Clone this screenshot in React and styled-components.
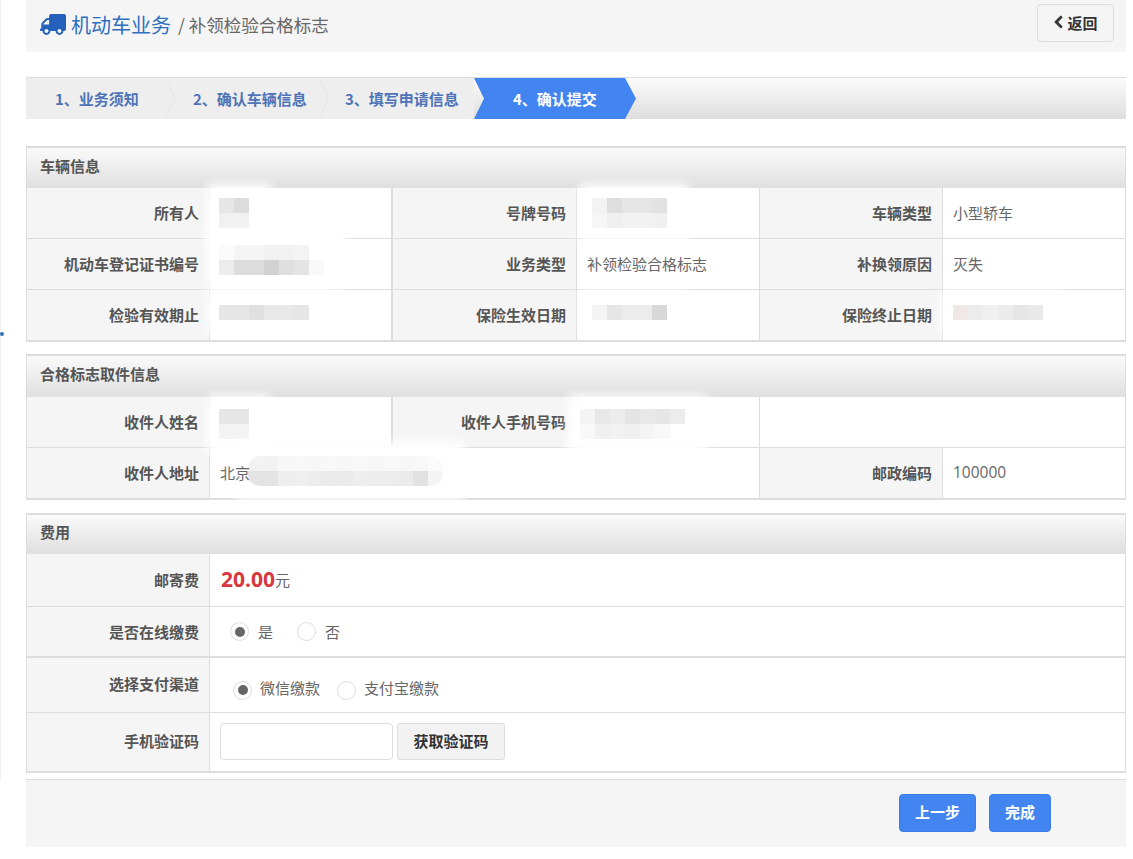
import React from 'react'
import styled, { createGlobalStyle } from 'styled-components'
import { FaTruck, FaChevronLeft } from 'react-icons/fa'

const GlobalStyle = createGlobalStyle`
  html, body {
    margin: 0;
    padding: 0;
    background: #fff;
  }
  body {
    font-family: "Noto Sans CJK SC", "Liberation Sans", sans-serif;
    font-size: 15px;
    color: #666;
  }
  * {
    box-sizing: border-box;
  }
`;
const Page = styled.div`
  position: relative;
  width: 1133px;
  height: 859px;
  padding-left: 26px;
  overflow: hidden;
`;
const Rail = styled.div`
  position: absolute;
  left: 0;
  top: 0;
  width: 2px;
  height: 780px;
  border-left: 1px solid #f0f0f0;
  &::after {
    content: '';
    position: absolute;
    left: -1px;
    top: 332px;
    width: 4px;
    height: 4px;
    border-radius: 50%;
    background: #2f6fb5;
  }
`;
const Content = styled.div`
  width: 1100px;
`;
const TitleBar = styled.div`
  height: 52px;
  background: #f5f5f5;
  display: flex;
  align-items: center;
  justify-content: space-between;
  padding: 0 12px 6px 14px;
`;
const Title = styled.div`
  display: flex;
  align-items: center;
  margin-top: 2px;
`;
const TruckIcon = styled(FaTruck)`
  width: 26px;
  height: 23px;
  color: #2461bd;
  transform: scaleX(-1);
  margin-right: 5px;
`;
const TitleMain = styled.span`
  font-size: 20px;
  color: #2f6fc0;
`;
const TitleSub = styled.span`
  font-size: 17.5px;
  color: #666;
  margin-left: 7px;
`;
const BackButton = styled.button`
  width: 77px;
  height: 38px;
  border: 1px solid #ddd;
  border-radius: 4px;
  background: #f5f5f5;
  color: #333;
  font: bold 15px "Noto Sans CJK SC", sans-serif;
  display: flex;
  align-items: center;
  justify-content: center;
  gap: 3px;
  padding: 0 0 2px;
  svg {
    width: 11px;
    height: 14px;
    stroke: currentColor;
    stroke-width: 30;
  }
`;
const Steps = styled.div`
  display: flex;
  height: 42px;
  margin-top: 25px;
  border-top: 1px solid #ddd;
  background: linear-gradient(#fbfbfb, #dedede);
`;
const Step = styled.div`
  position: relative;
  width: ${(props) => props.$width}px;
  background: ${(props) => props.$active ? '#4285f0' : props.$plain ? '#eee' : 'transparent'};
  clip-path: ${(props) => props.$active ? 'polygon(0 0, 151px 0, 162px 50%, 151px 100%, 0 100%, 10px 50%)' : 'none'};
  color: ${(props) => props.$active ? '#fff' : '#4e74b8'};
  font-weight: bold;
  font-size: 15px;
  line-height: 41px;
  padding-left: ${(props) => props.$indent}px;
`;
const StepChevron = styled.svg`
  position: absolute;
  z-index: 1;
  right: -9px;
  top: 0;
  width: 10px;
  height: 41px;
`;
const Section = styled.div`
  border: 1px solid #ddd;
  border-top-width: 2px;
  border-bottom-width: 2px;
  margin-top: ${(props) => props.$gap}px;
`;
const SectionHead = styled.div`
  height: ${(props) => props.$height}px;
  background: linear-gradient(#fafafa, #dfdfdf);
  color: #555;
  font-weight: bold;
  font-size: 15px;
  display: flex;
  align-items: center;
  padding: 0 0 6px 13px;
`;
const InfoGrid = styled.div`
  display: grid;
  grid-template-columns: 183px 183px 184px 183px 183px 1fr;
`;
const FeeGrid = styled.div`
  display: grid;
  grid-template-columns: 183px 1fr;
`;
const Label = styled.div`
  height: ${(props) => props.$height || 51}px;
  background: #f5f5f5;
  color: #555;
  font-weight: bold;
  font-size: 15px;
  text-align: right;
  padding: 0 10px ${(props) => props.$shift ?? 2}px 0;
  display: flex;
  align-items: center;
  justify-content: flex-end;
  border-bottom: ${(props) => props.$last ? 0 : props.$heavy ? '2px' : '1px'} solid #ddd;
  border-right: 1px solid #ddd;
`;
const Value = styled.div`
  position: relative;
  height: ${(props) => props.$height || 51}px;
  padding: 0 0 2px 10px;
  display: flex;
  align-items: center;
  font-size: 15px;
  color: #666;
  grid-column: span ${(props) => props.$span || 1};
  border-bottom: ${(props) => props.$last ? 0 : props.$heavy ? '2px' : '1px'} solid #ddd;
  border-right: ${(props) => props.$divider ? '2px solid #ddd' : props.$rule ? '1px solid #ddd' : '0'};
`;
const Blur = styled.div`
  position: absolute;
  left: ${(props) => props.$left}px;
  top: ${(props) => props.$top}px;
  display: flex;
  filter: blur(0.6px);
  &::before {
    content: '';
    position: absolute;
    left: -12px;
    top: -14px;
    right: -22px;
    bottom: -14px;
    background: #fff;
    filter: blur(5px);
  }
`;
const BlurRow = styled.div`
  position: relative;
  display: flex;
`;
const BlurStack = styled.div`
  position: relative;
  display: flex;
  flex-direction: column;
  border-radius: ${(props) => props.$round || 0}px;
  overflow: hidden;
`;
const Pixel = styled.span`
  width: 15px;
  height: 15px;
`;
const AboveBlur = styled.span`
  position: relative;
  z-index: 1;
`;
const Money = styled.span`
  font-family: "Open Sans", sans-serif;
  font-size: 21px;
  font-weight: bold;
  color: #d9363e;
  margin-left: 1px;
`;
const Digits = styled.span`
  font-family: "Open Sans", sans-serif;
  font-size: 15.5px;
`;
const Radios = styled.div`
  display: flex;
  align-items: center;
  padding-left: ${(props) => props.$indent}px;
  padding-top: ${(props) => props.$top || 0}px;
`;
const RadioItem = styled.label`
  display: flex;
  align-items: center;
  margin-right: ${(props) => props.$gap || 0}px;
`;
const RadioDot = styled.span`
  width: 19px;
  height: 19px;
  border-radius: 50%;
  border: 1px solid #ddd;
  background: #fff;
  display: flex;
  align-items: center;
  justify-content: center;
  margin-right: ${(props) => props.$gap}px;
  margin-top: ${(props) => props.$drop || 0}px;
  &::after {
    content: '';
    width: 10px;
    height: 10px;
    border-radius: 50%;
    background: ${(props) => props.$on ? '#666' : 'transparent'};
  }
`;
const CodeInput = styled.input`
  width: 173px;
  height: 37px;
  border: 1px solid #ddd;
  border-radius: 4px;
  background: #fff;
  outline: none;
`;
const CodeButton = styled.button`
  width: 108px;
  height: 37px;
  margin-left: 4px;
  padding: 0 0 1px;
  border: 1px solid #ddd;
  border-radius: 3px;
  background: #f2f2f2;
  color: #333;
  font: bold 15px "Noto Sans CJK SC", sans-serif;
`;
const Footer = styled.div`
  height: 68px;
  margin-top: 6px;
  border-top: 1px solid #ddd;
  background: #f5f5f5;
  display: flex;
  justify-content: flex-end;
  padding: 14px 75px 0 0;
  gap: 13px;
`;
const PrimaryButton = styled.button`
  width: ${(props) => props.$width}px;
  height: 38px;
  padding: 0 0 3px;
  border: 1px solid #3b7de6;
  border-radius: 4px;
  background: #4285f0;
  color: #fff;
  font: bold 15px "Noto Sans CJK SC", sans-serif;
`;

// redacted values in the reference, each row is a list of grey levels
const blurs = {
  owner: [['#e6e6e6', '#dcdcdc'], ['#f1f1f1', '#f1f1f1']],
  plate: [['#f3f3f3', '#dedede', '#e6e6e6', '#e6e6e6', '#e2e2e2'], ['#f6f6f6', '#efefef', '#f2f2f2', '#f2f2f2', '#f0f0f0']],
  cert: [['#fbfbfb', '#f5f5f5', '#f5f5f5', '#f1f1f1', '#f1f1f1', '#f3f3f3'], ['#ececec', '#dcdcdc', '#dcdcdc', '#d2d2d2', '#dfdfdf', '#e4e4e4', '#f9f9f9']],
  date: [['#e6e6e6', '#e6e6e6', '#e0e0e0', '#e8e8e8', '#e8e8e8', '#e6e6e6']],
  start: [['#f4f4f4', '#e6e6e6', '#ececec', '#ececec', '#d8d8d8']],
  end: [['#f0e8e8', '#ececec', '#f0f0f0', '#ebebeb', '#e6e6e6', '#e9e9e9']],
  name: [['#e6e6e6', '#e6e6e6'], ['#f3f3f3', '#f3f3f3']],
  phone: [['#f4f4f4', '#e8e8e8', '#ececec', '#e4e4e4', '#e8e8e8', '#e6e6e6', '#ececec'], ['#f8f8f8', '#f0f0f0', '#f2f2f2', '#f0f0f0', '#f4f4f4', '#f8f8f8']],
  address: [
    ['#f2f2f2', '#f2f2f2', '#f7f7f7', '#f8f8f8', '#f7f7f7', '#f8f8f8', '#f7f7f7', '#f8f8f8', '#f7f7f7', '#f8f8f8', '#f7f7f7', '#f8f8f8', '#fbfbfb'],
    ['#e4e4e4', '#e4e4e4', '#eeeeee', '#efefef', '#ececec', '#ebebeb', '#eaeaea', '#eeeeee', '#ececec', '#ececec', '#ebebeb', '#e2e2e2', '#f4f4f4'],
  ],
}

const Redacted = ({ rows, left, top, round }) => (
  <Blur $left={left} $top={top}>
    <BlurStack $round={round}>
      {rows.map((row, r) => (
        <BlurRow key={r}>
          {row.map((grey, c) => <Pixel key={c} style={{ background: grey }} />)}
        </BlurRow>
      ))}
    </BlurStack>
  </Blur>
)

const App = () => {
  return (
    <Page>
      <GlobalStyle />
      <Rail />
      <Content>
        <TitleBar>
          <Title>
            <TruckIcon />
            <TitleMain>机动车业务</TitleMain>
            <TitleSub>/ 补领检验合格标志</TitleSub>
          </Title>
          <BackButton><FaChevronLeft />返回</BackButton>
        </TitleBar>

        <Steps>
          <Step $width={141} $indent={29} $plain>
            1、业务须知
            <StepChevron viewBox="0 0 10 41"><path d="M0 0 L9 20 L0 41" fill="#eee" stroke="#e6e6e6" /></StepChevron>
          </Step>
          <Step $width={153} $indent={26} $plain>
            2、确认车辆信息
            <StepChevron viewBox="0 0 10 41"><path d="M0 0 L9 20 L0 41" fill="#eee" stroke="#e6e6e6" /></StepChevron>
          </Step>
          <Step $width={154} $indent={25} $plain>3、填写申请信息</Step>
          <Step $width={162} $indent={39} $active>4、确认提交</Step>
        </Steps>

        <Section $gap={27}>
          <SectionHead $height={40}>车辆信息</SectionHead>
          <InfoGrid>
            <Label>所有人</Label>
            <Value $divider><Redacted rows={blurs.owner} left={9} top={10} /></Value>
            <Label>号牌号码</Label>
            <Value $rule><Redacted rows={blurs.plate} left={15} top={10} /></Value>
            <Label>车辆类型</Label>
            <Value>小型轿车</Value>

            <Label>机动车登记证书编号</Label>
            <Value $divider><Redacted rows={blurs.cert} left={9} top={6} /></Value>
            <Label>业务类型</Label>
            <Value $rule>补领检验合格标志</Value>
            <Label>补换领原因</Label>
            <Value>灭失</Value>

            <Label $last $height={50}>检验有效期止</Label>
            <Value $divider $last $height={50}><Redacted rows={blurs.date} left={9} top={15} /></Value>
            <Label $last $height={50}>保险生效日期</Label>
            <Value $rule $last $height={50}><Redacted rows={blurs.start} left={15} top={15} /></Value>
            <Label $last $height={50}>保险终止日期</Label>
            <Value $last $height={50}><Redacted rows={blurs.end} left={10} top={15} /></Value>
          </InfoGrid>
        </Section>

        <Section $gap={12}>
          <SectionHead $height={41}>合格标志取件信息</SectionHead>
          <InfoGrid>
            <Label>收件人姓名</Label>
            <Value $divider><Redacted rows={blurs.name} left={9} top={12} /></Value>
            <Label>收件人手机号码</Label>
            <Value $rule><Redacted rows={blurs.phone} left={3} top={12} /></Value>
            <Value $span={2} />

            <Label $last $height={50}>收件人地址</Label>
            <Value $span={3} $last $rule $height={50}>
              <AboveBlur>北京</AboveBlur>
              <Redacted rows={blurs.address} left={38} top={8} round={12} />
            </Value>
            <Label $last $height={50}>邮政编码</Label>
            <Value $last $height={50}><Digits>100000</Digits></Value>
          </InfoGrid>
        </Section>

        <Section $gap={13}>
          <SectionHead $height={39}>费用</SectionHead>
          <FeeGrid>
            <Label $height={53}>邮寄费</Label>
            <Value $height={53}><Money>20.00</Money>元</Value>

            <Label $heavy $shift={0}>是否在线缴费</Label>
            <Value $heavy>
              <Radios $indent={10} $top={2}>
                <RadioItem $gap={24}><RadioDot $on $gap={9} />是</RadioItem>
                <RadioItem><RadioDot $gap={9} />否</RadioItem>
              </Radios>
            </Value>

            <Label $height={55} $shift={3}>选择支付渠道</Label>
            <Value $height={55}>
              <Radios $indent={13} $top={6}>
                <RadioItem $gap={17}><RadioDot $on $gap={8} $drop={6} />微信缴款</RadioItem>
                <RadioItem><RadioDot $gap={8} $drop={6} />支付宝缴款</RadioItem>
              </Radios>
            </Value>

            <Label $height={58} $last $shift={4}>手机验证码</Label>
            <Value $height={58} $last>
              <CodeInput />
              <CodeButton>获取验证码</CodeButton>
            </Value>
          </FeeGrid>
        </Section>

        <Footer>
          <PrimaryButton $width={77}>上一步</PrimaryButton>
          <PrimaryButton $width={62}>完成</PrimaryButton>
        </Footer>
      </Content>
    </Page>
  )
}

export default App
